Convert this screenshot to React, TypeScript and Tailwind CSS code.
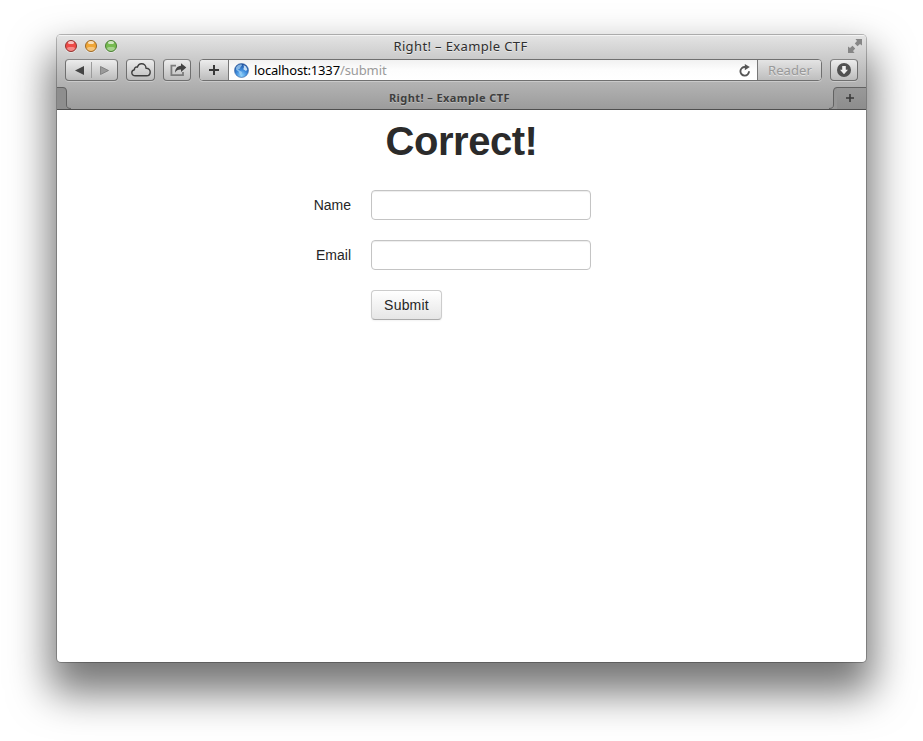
import type { ReactNode } from "react";

const chromeFont = "font-['Noto_Sans','Open_Sans',sans-serif]";
const button =
  "flex h-[22px] shrink-0 items-center justify-center rounded-[4px] border border-[#6f6f6f] border-t-[#858585] bg-linear-to-b from-[#ededed] to-[#bcbcbc] shadow-[0_1px_0_rgba(255,255,255,0.3)]";

function Light({ className }: { className: string }) {
  return (
    <span className={`relative size-3 overflow-hidden rounded-full border shadow-[0_1px_0_rgba(255,255,255,0.4)] ${className}`}>
      <span className="absolute top-0 left-[2px] h-[3px] w-[6px] rounded-full bg-white/65" />
      <span className="absolute bottom-0 left-[1px] h-[4px] w-[8px] rounded-full bg-white/35" />
    </span>
  );
}

function TitleBar() {
  return (
    <div className="flex h-[24px] items-start justify-between pr-[4px] pl-[8px]">
      <div className="flex w-[60px] gap-[8px] pt-[5px]">
        <Light className="border-[#8e3531] bg-[#ef4a47]" />
        <Light className="border-[#9a6829] bg-[#f0a636]" />
        <Light className="border-[#4b7e36] bg-[#76bb50]" />
      </div>
      <h2 className="pt-[3px] pr-[6px] text-[13px] leading-[17px] tracking-[0.37px] whitespace-nowrap text-[#2f2f2f] [text-shadow:0_1px_0_rgba(255,255,255,0.5)]">
        Right! – Example CTF
      </h2>
      <div className="flex w-[60px] justify-end pt-[4px]">
        <svg width="14" height="14" viewBox="0 0 14 14" fill="#868686">
          <path d="M7.5 0H14V6.5L12 5L9.5 7.2L6.8 4.5L9 2Z" />
          <path d="M6.5 14H0V7.5L2 9L4.5 6.8L7.2 9.5L5 12Z" />
        </svg>
      </div>
    </div>
  );
}

function Plus({ size }: { size: number }) {
  return (
    <svg width={size} height={size} viewBox="0 0 10 10" fill="#393939">
      <path d="M4 0H6V4H10V6H6V10H4V6H0V4H4Z" />
    </svg>
  );
}

function Globe() {
  return (
    <svg width="15" height="15" viewBox="0 0 15 15" className="shrink-0">
      <defs>
        <radialGradient id="sea" cx="50%" cy="85%" r="80%">
          <stop offset="0" stopColor="#8fd2fb" />
          <stop offset="0.5" stopColor="#3d8bdc" />
          <stop offset="1" stopColor="#1c4f9f" />
        </radialGradient>
      </defs>
      <circle cx="7.5" cy="7.5" r="7" fill="url(#sea)" stroke="#3a659f" strokeWidth="0.6" />
      <path d="M2 4.5Q4 1.4 7.5 1.3L8 2.6L6.5 4L6 5.6L4 6.5L5.5 7.6L8 9L7.5 11L6.5 12Q5 10.5 4.7 8.6L2.2 7Z" fill="#a9d6f7" opacity="0.7" />
      <path d="M9.5 2L12 3.5L13.3 6.6L12 8L10.5 7L9.3 6.2L10 4Z" fill="#dff1fd" opacity="0.85" />
    </svg>
  );
}

function Toolbar() {
  return (
    <div className="flex h-[28px] items-start pr-[8px] pl-[8px]">
      <div className={`${button} w-[53px]`}>
        <span className="flex w-[25px] justify-center pl-[1px]">
          <svg width="9" height="9" viewBox="0 0 9 9"><path d="M0 4.5L9 0V9Z" fill="#454545" /></svg>
        </span>
        <span className="h-4 w-px bg-[#9b9b9b]" />
        <span className="flex w-[25px] justify-center">
          <svg width="9" height="9" viewBox="0 0 9 9"><path d="M8.5 4.5L.5 .5V8.5Z" fill="#9a9a9a" stroke="#777" strokeWidth=".8" /></svg>
        </span>
      </div>
      <div className={`${button} ml-[8px] w-[29px]`}>
        <svg width="20" height="14" viewBox="0 0 20 14" fill="none" stroke="#3f3f3f" strokeWidth="1.4" strokeLinejoin="round">
          <path d="M4.4 12.8C2.3 12.8.8 11.6.8 9.7C.8 8 2 6.9 3.5 6.7C3.1 4.9 4.8 3.5 6.4 4.2C7 2.1 8.5.8 10.5.8C13.2.8 15 2.6 15 5.2C17.4 5 19.2 6.7 19.2 9C19.2 11.3 17.7 12.8 15.5 12.8Z" />
        </svg>
      </div>
      <div className={`${button} ml-[8px] w-[28px]`}>
        <svg width="17" height="14" viewBox="0 0 17 14" className="ml-[2px]">
          <path d="M6 2.6H1.4V12.2H13V9" fill="none" stroke="#7c7c7c" strokeWidth="1.8" />
          <path d="M11 .2L16.3 4.6L11 9V6.6C8.2 6.4 6.4 7.6 5 9.8C5 5.8 7 3 11 2.7Z" fill="#444" />
        </svg>
      </div>
      <div className="ml-[8px] flex h-[22px] w-[623px] overflow-hidden rounded-[4px] border border-[#707070] bg-white shadow-[0_1px_0_rgba(255,255,255,0.3)]">
        <div className="flex w-[29px] items-center justify-center border-r border-[#777] bg-linear-to-b from-[#ededed] to-[#bcbcbc]">
          <Plus size={10} />
        </div>
        <div className="flex flex-1 items-center bg-linear-to-b from-[#f1f1f1] via-[#fdfdfd] to-white pr-[6px] pl-[5px]">
          <Globe />
          <span className="ml-[5px] text-[13px] leading-[20px] whitespace-nowrap text-black">
            <span className="tracking-[-0.16px]">localhost:1337</span>
            <span className="tracking-[-0.1px] text-[#9a9a9a]">/submit</span>
          </span>
          <svg className="ml-auto" width="12" height="13" viewBox="0 0 12 13">
            <path d="M10 7.2A4.3 4.3 0 1 1 6 3" fill="none" stroke="#555" strokeWidth="1.9" />
            <path d="M5.8 0L10.8 3.1L5.8 6.2Z" fill="#555" />
          </svg>
        </div>
        <div className="-mr-px flex w-[65px] items-center justify-center border-l border-[#777] bg-linear-to-b from-[#e4e4e4] to-[#bebebe] text-[13px] leading-5 text-[#999] [text-shadow:0_1px_0_rgba(255,255,255,0.5)]">
          <span className="tracking-[0.1px]">Reader</span>
        </div>
      </div>
      <div className={`${button} ml-[8px] w-[28px]`}>
        <svg width="14" height="14" viewBox="0 0 14 14">
          <circle cx="7" cy="7" r="7" fill="#505050" />
          <path d="M5.2 3H8.8V6.7H11L7 11.2L3 6.7H5.2Z" fill="#eee" />
        </svg>
      </div>
    </div>
  );
}

function TabBar() {
  return (
    <div className="flex h-[23px] items-stretch border-b border-[#4f4f4f]">
      <svg width="16" height="22" viewBox="0 0 16 22" className="shrink-0">
        <path d="M0 0H6Q9.5 0 9.5 4V18Q9.5 21.5 14 22H0Z" fill="#8e8e8e" />
        <path d="M0 .5H6Q9.5 .5 9.5 4V18Q9.5 21.5 14 21.5" fill="none" stroke="#626262" />
      </svg>
      <div className="flex flex-1 items-center justify-center text-[11px] leading-[22px] font-bold whitespace-nowrap text-[#3e3e3e] [text-shadow:0_1px_0_rgba(255,255,255,0.3)]">
        <span className="-ml-[3px] tracking-[0.42px]">Right! – Example CTF</span>
      </div>
      <div className="flex shrink-0">
        <svg width="8" height="22" viewBox="0 0 8 22">
          <path d="M8 0Q4.5 0 4.5 4V18Q4.5 21.5 0 22H8Z" fill="#969696" />
          <path d="M8 .5Q4.5 .5 4.5 4V18Q4.5 21.5 0 21.5" fill="none" stroke="#626262" />
        </svg>
        <div className="flex w-[29px] items-center border-t border-[#626262] bg-linear-to-b from-[#999] to-[#8d8d8d] pb-[1px] pl-[9px]">
          <Plus size={8} />
        </div>
      </div>
    </div>
  );
}

function Row({ label, children }: { label?: string; children: ReactNode }) {
  return (
    <div className="mb-[20px] flex h-[30px] items-center">
      <label className="mr-[20px] w-[160px] text-right">{label}</label>
      {children}
    </div>
  );
}

const field =
  "h-[30px] w-[220px] rounded-[4px] border border-[#c4c4c4] bg-white px-[6px] shadow-[inset_0_1px_1px_rgba(0,0,0,0.075)] outline-none";

export default function App() {
  return (
    <div className="h-[741px] w-[923px] overflow-hidden bg-white pt-[35px] pl-[57px]">
      <div className={`h-[627px] w-[809px] overflow-hidden rounded-[4px] bg-white shadow-[0_0_0_1px_rgba(0,0,0,0.25),0_24px_40px_7px_rgba(0,0,0,0.54)] ${chromeFont}`}>
        <header className="h-[75px] bg-linear-to-b from-[#e4e4e4] via-[#bcbcbc] to-[#9b9b9b] shadow-[inset_0_1px_0_#f4f4f4]">
          <TitleBar />
          <Toolbar />
          <TabBar />
        </header>
        <main className="font-['Liberation_Sans',Arial,sans-serif] text-[14px] leading-[20px] text-[#262626]">
          <h1 className="h-[80px] pt-[11px] text-center text-[40px] leading-[40px] font-bold tracking-[-0.45px] text-[#2b2b2b]">Correct!</h1>
          <form className="ml-[134px]">
            <Row label="Name"><input className={field} aria-label="Name" /></Row>
            <Row label="Email"><input className={field} aria-label="Email" /></Row>
            <Row>
              <button type="button" className="h-[30px] w-[71px] rounded-[4px] border border-[#ccc] border-b-[#aaa] bg-linear-to-b from-white to-[#e6e6e6] tracking-[0.2px] shadow-[0_1px_2px_rgba(0,0,0,0.05)]">
                Submit
              </button>
            </Row>
          </form>
        </main>
      </div>
    </div>
  );
}
